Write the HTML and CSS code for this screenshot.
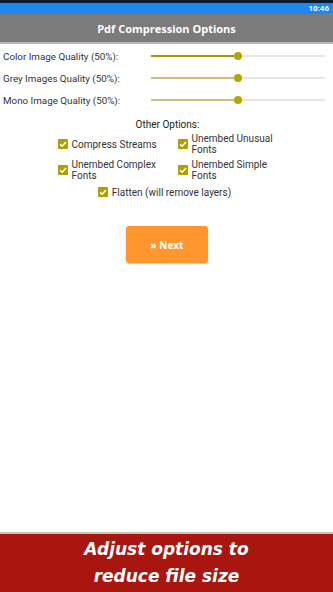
FILE: index.html
```html
<!DOCTYPE html>
<html lang="en">
<head>
  <meta charset="UTF-8">
  <meta name="viewport" content="width=device-width, initial-scale=1.0">
  <link rel="stylesheet" href="styles.css">
  <title>Pdf Compression Options</title>
</head>
<body>
  <div class="screen">
    <!-- Status Bar -->
    <div class="status-bar"><span class="clock">10:46</span></div>

    <!-- Action Bar -->
    <div class="action-bar">Pdf Compression Options</div>

    <div class="content">
      <!-- Quality Sliders -->
      <div class="slider-row">
        <span class="slider-label">Color Image Quality (50%):</span>
        <div class="slider focused"><div class="fill"></div><span class="thumb"></span></div>
      </div>
      <div class="slider-row">
        <span class="slider-label">Grey Images Quality (50%):</span>
        <div class="slider"><div class="fill"></div><span class="thumb"></span></div>
      </div>
      <div class="slider-row">
        <span class="slider-label">Mono Image Quality (50%):</span>
        <div class="slider"><div class="fill"></div><span class="thumb"></span></div>
      </div>

      <!-- Other Options -->
      <div class="options-title">Other Options:</div>
      <div class="options-grid">
        <div class="option">
          <svg class="check" viewBox="0 0 10 10"><rect width="10" height="10" rx="1"/><path d="M2 5.2 L4.2 7.2 L8 3"/></svg>
          <span>Compress Streams</span>
        </div>
        <div class="option">
          <svg class="check" viewBox="0 0 10 10"><rect width="10" height="10" rx="1"/><path d="M2 5.2 L4.2 7.2 L8 3"/></svg>
          <span>Unembed Unusual Fonts</span>
        </div>
        <div class="option">
          <svg class="check" viewBox="0 0 10 10"><rect width="10" height="10" rx="1"/><path d="M2 5.2 L4.2 7.2 L8 3"/></svg>
          <span>Unembed Complex Fonts</span>
        </div>
        <div class="option">
          <svg class="check" viewBox="0 0 10 10"><rect width="10" height="10" rx="1"/><path d="M2 5.2 L4.2 7.2 L8 3"/></svg>
          <span>Unembed Simple Fonts</span>
        </div>
      </div>
      <div class="option single">
        <svg class="check" viewBox="0 0 10 10"><rect width="10" height="10" rx="1"/><path d="M2 5.2 L4.2 7.2 L8 3"/></svg>
        <span>Flatten (will remove layers)</span>
      </div>

      <button class="next-btn">&raquo; Next</button>
    </div>

    <!-- Promo Banner -->
    <div class="banner">Adjust options to<br>reduce file size</div>
  </div>
</body>
</html>
```

FILE: styles.css
```css
/* General Styles */
body {
  margin: 0;
  font-family: Roboto, "Liberation Sans", sans-serif;
  background: #ffffff;
}

.screen {
  width: 333px;
  height: 592px;
  display: flex;
  flex-direction: column;
  overflow: hidden;
}

/* Status Bar */
.status-bar {
  height: 11px;
  border-top: 3px solid #0d1a2a;
  background: #1e88f2;
  display: flex;
  justify-content: flex-end;
  align-items: center;
  padding-right: 4px;
}

.clock {
  color: #ffffff;
  font-size: 8px;
  font-weight: bold;
}

/* Action Bar */
.action-bar {
  height: 28px;
  background: #7b7b7b;
  border-bottom: 2px solid #b9b9b9;
  color: #ffffff;
  font-family: "Open Sans", sans-serif;
  font-weight: bold;
  font-size: 11px;
  display: flex;
  align-items: center;
  justify-content: center;
}

.content {
  flex: 1;
  display: flex;
  flex-direction: column;
  padding-top: 1px;
}

/* Sliders */
.slider-row {
  display: flex;
  align-items: center;
  height: 22px;
  padding-left: 3px;
  padding-right: 8px;
}

.slider-label {
  width: 148px;
  font-size: 9.8px;
  color: #333333;
}

.slider {
  flex: 1;
  height: 2px;
  background: #e6e6e6;
  position: relative;
}

.slider .fill {
  width: 50%;
  height: 100%;
  background: #c9c27a;
}

.slider.focused .fill {
  background: #a59d05;
}

.slider .thumb {
  position: absolute;
  left: 50%;
  top: -3px;
  width: 8px;
  height: 8px;
  margin-left: -4px;
  border-radius: 50%;
  background: #b3a600;
}

/* Other Options */
.options-title {
  text-align: center;
  font-size: 10px;
  color: #222222;
  margin-top: 8px;
  margin-bottom: 3px;
  padding-left: 2px;
}

.options-grid {
  display: grid;
  grid-template-columns: 120px 100px;
  justify-content: center;
  row-gap: 4px;
  margin-left: 2px;
}

.option {
  display: flex;
  align-items: center;
  font-size: 10px;
  line-height: 11px;
  color: #333333;
  min-height: 22px;
}

.option.single {
  justify-content: center;
  padding-right: 4px;
}

.check {
  flex: none;
  width: 10px;
  height: 10px;
  margin-right: 4px;
}

.check rect {
  fill: #aea000;
}

.check path {
  fill: none;
  stroke: #ffffff;
  stroke-width: 1.5;
}

/* Next Button */
.next-btn {
  align-self: center;
  margin-top: 23px;
  margin-left: 1px;
  width: 82px;
  height: 37px;
  border: none;
  border-radius: 3px;
  background: #ff962e;
  color: #ffffff;
  font-family: "Open Sans", sans-serif;
  font-weight: bold;
  font-size: 10px;
  box-shadow: 0 1px 2px rgba(0, 0, 0, 0.15);
}

/* Promo Banner */
.banner {
  height: 60px;
  border-top: 2px solid #c9c2bd;
  background: #a8160f;
  color: #ffffff;
  font-family: "DejaVu Sans", sans-serif;
  font-weight: bold;
  font-style: italic;
  font-size: 17px;
  line-height: 27px;
  text-align: center;
  padding-top: 2px;
  box-sizing: border-box;
}
```
